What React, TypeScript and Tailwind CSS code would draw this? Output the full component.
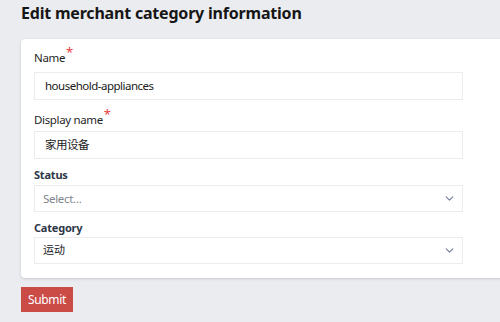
import { ChevronDown } from 'lucide-react';

const FONT = { fontFamily: '"Noto Sans", "Noto Sans CJK SC", sans-serif' };

function Label({ text, required, bold }: { text: string; required?: boolean; bold?: boolean }) {
  if (bold) {
    return (
      <div className="text-[11px] leading-[16px] font-bold tracking-[-0.2px] text-[#2d3748]">{text}</div>
    );
  }
  return (
    <div className="text-[11.5px] leading-[20px] tracking-[-0.35px] text-[#1f1f1f]">
      {text}
      <span className="text-[#e53e3e] relative -top-[5px] text-[13px] ml-[1px]">*</span>
    </div>
  );
}

function TextInput({ value }: { value: string }) {
  return (
    <div className="h-[28px] border border-[#ececec] bg-white flex items-center px-[10px] text-[11.5px] tracking-[-0.5px] text-[#1a1a1a]">
      {value}
    </div>
  );
}

function SelectBox({ value, placeholder }: { value: string; placeholder?: boolean }) {
  return (
    <div className="h-[27px] border border-[#ececec] bg-white flex items-center justify-between pl-[8px] pr-[6px]">
      <span
        className={
          placeholder
            ? 'text-[11.5px] tracking-[-0.3px] text-[#80858d]'
            : 'text-[11px] text-[#1a1a1a]'
        }
      >
        {value}
      </span>
      <ChevronDown className="w-[13px] h-[13px] text-[#7b84a3]" strokeWidth={2.3} />
    </div>
  );
}

export default function App() {
  return (
    <div className="w-[500px] h-[322px] overflow-hidden bg-[#ebecf0]" style={FONT}>
      <h1 className="pl-[21px] pt-[1px] text-[16px] leading-[24px] font-bold tracking-[-0.2px] text-[#161616]">
        Edit merchant category information
      </h1>
      <div className="ml-[21px] mt-[14px] w-[500px] bg-white rounded-[4px] shadow-[0_1px_3px_rgba(0,0,0,0.15)] pl-[13px] pt-[8px] pb-[14px]">
        <div className="w-[429px]">
          <Label text="Name" required />
          <div className="mt-[4px]">
            <TextInput value="household-appliances" />
          </div>
          <div className="mt-[9px]">
            <Label text="Display name" required />
          </div>
          <div className="mt-[1px]">
            <TextInput value="家用设备" />
          </div>
          <div className="mt-[8px]">
            <Label text="Status" bold />
          </div>
          <div className="mt-[2px]">
            <SelectBox value="Select..." placeholder />
          </div>
          <div className="mt-[8px]">
            <Label text="Category" bold />
          </div>
          <div className="mt-[1px]">
            <SelectBox value="运动" />
          </div>
        </div>
      </div>
      <button className="ml-[21px] mt-[9px] h-[25px] w-[52px] bg-[#cb4b47] text-white text-[12px] tracking-[-0.3px] flex items-center justify-center">
        Submit
      </button>
    </div>
  );
}
